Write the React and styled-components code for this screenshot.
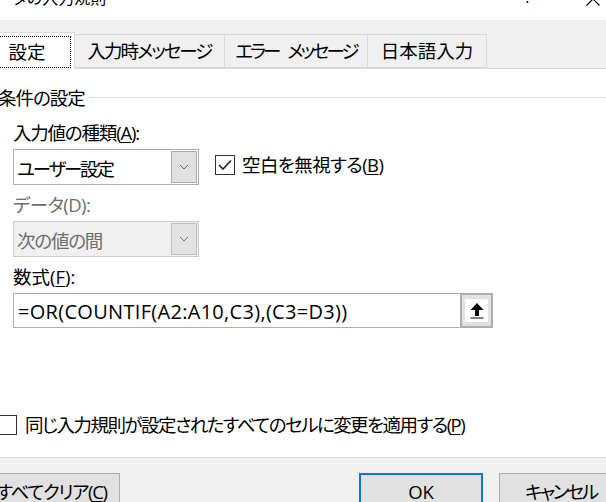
import React from 'react'
import styled, { createGlobalStyle } from 'styled-components'

const GlobalStyle = createGlobalStyle`
  html, body {
    margin: 0;
    padding: 0;
    background: #fff;
  }
  body {
    font-family: "Open Sans", "Noto Sans CJK JP", sans-serif;
    font-feature-settings: "palt";
    font-size: 18.5px;
    color: #000;
  }
`

const Window = styled.div`
  width: 606px;
  height: 502px;
  overflow: hidden;
  display: flex;
  flex-direction: column;
  background: #f0f0f0;
`

const TitleBar = styled.div`
  height: 20px;
  flex-shrink: 0;
  background: #fff;
  display: flex;
  align-items: flex-start;
  overflow: hidden;
`

const Title = styled.div`
  font-size: 16px;
  line-height: 16px;
  margin-top: -10px;
  margin-left: -18px;
  white-space: nowrap;
`

const TitleButtons = styled.div`
  margin-left: auto;
  display: flex;
  align-items: flex-start;
  gap: 50px;
  padding-right: 6px;
`

const HelpGlyph = styled.div`
  width: 16px;
  text-align: center;
  font-size: 16px;
  line-height: 16px;
  margin-top: -11px;
`

const CloseGlyph = styled.svg`
  margin-top: -8px;
`

const TabStrip = styled.div`
  height: 49px;
  box-sizing: border-box;
  flex-shrink: 0;
  display: flex;
  align-items: flex-end;
  border-bottom: 1px solid #d9d9d9;
`

const Tab = styled.div`
  box-sizing: border-box;
  width: ${p => p.$w}px;
  margin-left: ${p => p.$ml}px;
  height: ${p => (p.$active ? 37 : 34)}px;
  margin-bottom: ${p => (p.$active ? -1 : 0)}px;
  background: ${p => (p.$active ? '#fff' : '#f0f0f0')};
  border: 1px solid #d9d9d9;
  border-bottom: ${p => (p.$active ? 'none' : '1px solid #d9d9d9')};
  padding: ${p => (p.$active ? '3px 3px 1px 3px' : '0')};
  display: flex;
  white-space: nowrap;
`

const TabLabel = styled.div`
  flex: 1;
  display: flex;
  align-items: center;
  justify-content: center;
  border: 1px dotted ${p => (p.$focus ? '#000' : 'transparent')};
  line-height: 24px;
  letter-spacing: ${p => p.$ls || 0}px;
  word-spacing: ${p => p.$ws || 0}px;
  white-space: pre;
`

const Panel = styled.div`
  height: 389px;
  box-sizing: border-box;
  flex-shrink: 0;
  background: #fff;
  border-bottom: 1px solid #d9d9d9;
  padding: 16px 0 20px 13px;
  display: flex;
  flex-direction: column;
`

const GroupHeader = styled.div`
  display: flex;
  align-items: center;
  gap: 4px;
  height: 24px;
  margin-left: -15px;
  letter-spacing: -1px;
`

const GroupLine = styled.div`
  flex: 1;
  height: 1px;
  background: #dcdcdc;
`

const FieldLabel = styled.div`
  height: 24px;
  line-height: 24px;
  margin-top: ${p => p.$mt}px;
  color: ${p => (p.$disabled ? '#6d6d6d' : '#000')};
  letter-spacing: ${p => p.$ls || 0}px;
  white-space: nowrap;
`

const Key = styled.span`
  text-decoration: underline;
  text-underline-offset: 2px;
  text-decoration-thickness: 1px;
`

const ComboRow = styled.div`
  display: flex;
  align-items: flex-start;
  margin-top: 4px;
`

const Combo = styled.div`
  box-sizing: border-box;
  width: 186px;
  height: 36px;
  border: 1px solid ${p => (p.$disabled ? '#cccccc' : '#adadad')};
  background: ${p => (p.$disabled ? '#f0f0f0' : '#fff')};
  color: ${p => (p.$disabled ? '#6d6d6d' : '#000')};
  display: flex;
  align-items: stretch;
`

const ComboText = styled.div`
  flex: 1;
  display: flex;
  align-items: center;
  padding-left: 3px;
  padding-top: 2px;
  letter-spacing: ${p => p.$ls || 0}px;
  white-space: nowrap;
`

const ComboArrow = styled.div`
  box-sizing: border-box;
  width: 26px;
  margin: 1px 1px 1px 0;
  background: ${p => (p.$disabled ? '#e3e3e3' : '#e1e1e1')};
  border: 1px solid ${p => (p.$disabled ? '#bfbfbf' : '#adadad')};
  display: flex;
  align-items: center;
  justify-content: center;
`

const CheckRow = styled.label`
  display: flex;
  align-items: center;
  gap: ${p => p.$gap}px;
  margin-left: ${p => p.$ml}px;
  margin-top: ${p => p.$mt}px;
  white-space: nowrap;
`

const Box = styled.div`
  box-sizing: border-box;
  width: 20px;
  height: 20px;
  border: 1px solid #333;
  background: #fff;
  flex-shrink: 0;
  display: flex;
  align-items: center;
  justify-content: center;
`

const CheckText = styled.span`
  line-height: 24px;
  letter-spacing: ${p => p.$ls || 0}px;
`

const FormulaBox = styled.div`
  box-sizing: border-box;
  width: 480px;
  height: 35px;
  margin-top: 4px;
  border: 1px solid #adadad;
  display: flex;
  align-items: stretch;
`

const FormulaText = styled.div`
  flex: 1;
  display: flex;
  align-items: center;
  padding-left: 4px;
  padding-top: 1px;
  font-size: 20px;
  letter-spacing: 0.3px;
  white-space: nowrap;
`

const RefButton = styled.div`
  box-sizing: border-box;
  width: 33px;
  margin: -1px -1px -1px 0;
  border: 2px solid #adadad;
  background: #e1e1e1;
  padding: 4px 3px;
  display: flex;
`

const RefInner = styled.div`
  flex: 1;
  background: #fff;
  display: flex;
  align-items: center;
  justify-content: center;
`

const Spacer = styled.div`
  flex: 1;
`

const Footer = styled.div`
  flex: 1;
  display: flex;
  align-items: flex-start;
  gap: 16px;
  padding-top: 15px;
`

const Button = styled.div`
  box-sizing: border-box;
  flex-shrink: 0;
  width: ${p => p.$w}px;
  height: 36px;
  margin-left: ${p => p.$ml || 0};
  margin-right: ${p => p.$mr || 0};
  background: #e1e1e1;
  border: ${p => (p.$default ? '2px solid #0078d7' : '1px solid #adadad')};
  letter-spacing: ${p => p.$ls || 0}px;
  display: flex;
  align-items: center;
  justify-content: center;
  white-space: nowrap;
`

const Chevron = ({ color = '#606060' }) => (
  <svg width="10" height="6" viewBox="0 0 10 6">
    <path d="M1 1 L5 5 L9 1" fill="none" stroke={color} strokeWidth="1" />
  </svg>
)

const Check = () => (
  <svg width="16" height="14" viewBox="0 0 16 14">
    <path d="M2 7 L6 11 L14 2.5" fill="none" stroke="#222" strokeWidth="1.6" />
  </svg>
)

const RefIcon = () => (
  <svg width="14" height="16" viewBox="0 0 14 16">
    <polygon points="7,0 13.5,7 9,7 9,13 5,13 5,7 0.5,7" fill="#000" />
    <rect x="0.5" y="14.5" width="13" height="1" fill="#000" />
  </svg>
)

export default function App() {
  return (
    <>
      <GlobalStyle />
      <Window>
        <TitleBar>
          <Title>データの入力規則</Title>
          <TitleButtons>
            <HelpGlyph>?</HelpGlyph>
            <CloseGlyph width="14" height="14" viewBox="0 0 14 14">
              <path d="M0.5 0.5 L13.5 13.5 M13.5 0.5 L0.5 13.5" stroke="#000" strokeWidth="1.2" />
            </CloseGlyph>
          </TitleButtons>
        </TitleBar>

        <TabStrip>
          <Tab $active $w={96} $ml={-21}>
            <TabLabel $focus>設定</TabLabel>
          </Tab>
          <Tab $w={151} $ml={-1}>
            <TabLabel $ls={-2}>入力時メッセージ</TabLabel>
          </Tab>
          <Tab $w={144} $ml={-1}>
            <TabLabel $ls={-3} $ws={7}>エラー メッセージ</TabLabel>
          </Tab>
          <Tab $w={120} $ml={-1}>
            <TabLabel>日本語入力</TabLabel>
          </Tab>
        </TabStrip>

        <Panel>
          <GroupHeader>
            <span>条件の設定</span>
            <GroupLine />
          </GroupHeader>

          <FieldLabel $mt={12} $ls={-1.2}>
            入力値の種類(<Key>A</Key>):
          </FieldLabel>
          <ComboRow>
            <Combo>
              <ComboText $ls={-2.2}>ユーザー設定</ComboText>
              <ComboArrow>
                <Chevron />
              </ComboArrow>
            </Combo>
            <CheckRow $gap={7} $ml={16} $mt={4}>
              <Box>
                <Check />
              </Box>
              <CheckText $ls={-0.6}>
                空白を無視する(<Key>B</Key>)
              </CheckText>
            </CheckRow>
          </ComboRow>

          <FieldLabel $mt={8} $ls={-0.5} $disabled>
            データ(D):
          </FieldLabel>
          <ComboRow>
            <Combo $disabled>
              <ComboText $ls={-1.2}>次の値の間</ComboText>
              <ComboArrow $disabled>
                <Chevron color="#7a7a7a" />
              </ComboArrow>
            </Combo>
          </ComboRow>

          <FieldLabel $mt={8}>
            数式(<Key>F</Key>):
          </FieldLabel>
          <FormulaBox>
            <FormulaText>=OR(COUNTIF(A2:A10,C3),(C3=D3))</FormulaText>
            <RefButton>
              <RefInner>
                <RefIcon />
              </RefInner>
            </RefButton>
          </FormulaBox>

          <Spacer />

          <CheckRow $gap={8} $ml={-16} $mt={0}>
            <Box />
            <CheckText $ls={-1.55}>
              同じ入力規則が設定されたすべてのセルに変更を適用する(<Key>P</Key>)
            </CheckText>
          </CheckRow>
        </Panel>

        <Footer>
          <Button $w={137} $ml="-17px" $ls={-1.3}>
            すべてクリア(<Key>C</Key>)
          </Button>
          <Button $w={124} $ml="auto" $default>
            OK
          </Button>
          <Button $w={124} $mr="-17px" $ls={-2.4}>
            キャンセル
          </Button>
        </Footer>
      </Window>
    </>
  )
}
